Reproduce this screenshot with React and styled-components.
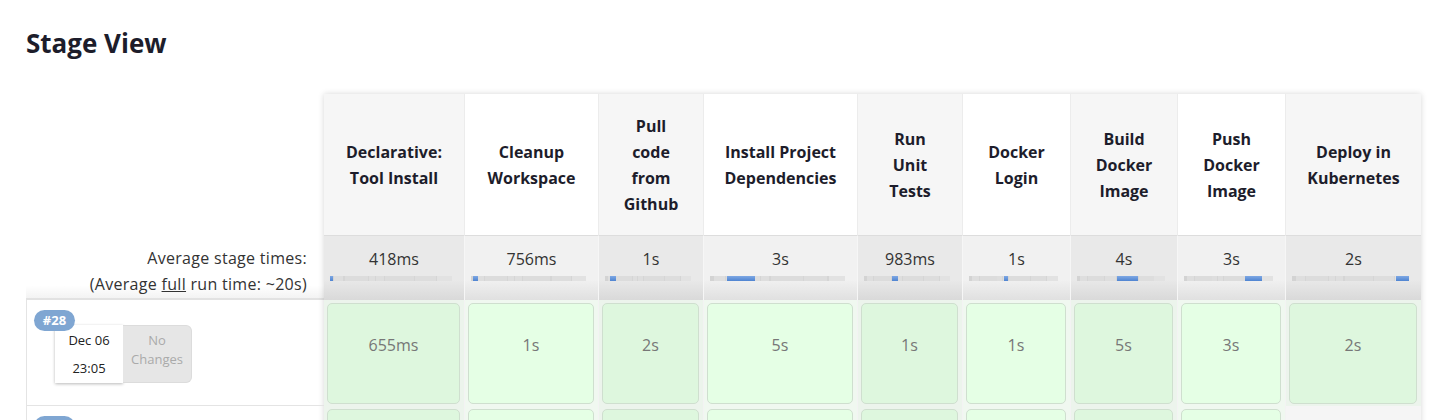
import React from "react";
import styled, { createGlobalStyle } from "styled-components";

const GlobalStyle = createGlobalStyle`
  html, body {
    margin: 0;
    padding: 0;
    background: #fff;
  }
  body {
    font-family: "Open Sans", "Noto Sans", sans-serif;
    color: #14141f;
  }
`;

const stages = [
  { lines: ["Declarative:", "Tool Install"], width: 140, avg: "418ms", at: 0, fill: 2.5, runs: ["655ms", "598ms"] },
  { lines: ["Cleanup", "Workspace"], width: 134, avg: "756ms", at: 1.7, fill: 4, runs: ["1s", "702ms"] },
  { lines: ["Pull", "code", "from", "Github"], width: 105, avg: "1s", at: 6, fill: 7, runs: ["2s", "1s"] },
  { lines: ["Install Project", "Dependencies"], width: 154, avg: "3s", at: 12.7, fill: 21, runs: ["5s", "3s"] },
  { lines: ["Run", "Unit", "Tests"], width: 105, avg: "983ms", at: 33, fill: 6, runs: ["1s", "1s"] },
  { lines: ["Docker", "Login"], width: 108, avg: "1s", at: 39, fill: 5, runs: ["1s", "1s"] },
  { lines: ["Build", "Docker", "Image"], width: 107, avg: "4s", at: 45, fill: 24, runs: ["5s", "4s"] },
  { lines: ["Push", "Docker", "Image"], width: 108, avg: "3s", at: 69, fill: 19, runs: ["3s", "3s"] },
  { lines: ["Deploy in", "Kubernetes"], width: 136, avg: "2s", at: 89, fill: 11, runs: ["2s", null] },
];

const builds = [
  { id: "#28", date: "Dec 06", time: "23:05" },
  { id: "#27", date: "Dec 06", time: "22:41" },
];

const HEADER_H = 141;
const AVG_H = 65;
const RUN_H = 106;

const Page = styled.div`
  padding: 27px 0 0 26px;
`;

const Title = styled.h2`
  margin: 0;
  font-size: 26px;
  line-height: 32px;
  font-weight: 700;
  color: #1d1d2b;
`;

const Board = styled.div`
  display: flex;
  align-items: flex-start;
  margin-top: 35px;
`;

const LeftCol = styled.div`
  width: 298px;
  display: flex;
  flex-direction: column;
  flex-shrink: 0;
`;

const LeftHead = styled.div`
  height: ${HEADER_H}px;
`;

const AvgLabel = styled.div`
  height: ${AVG_H}px;
  box-sizing: border-box;
  padding: 10px 17px 0 0;
  text-align: right;
  font-size: 16px;
  line-height: 26px;
  letter-spacing: 0.3px;
  color: #333;
  border-bottom: 2px solid #e2e2e2;
  background: linear-gradient(to bottom, #fff 80%, #f3f3f3 100%);

  u {
    text-decoration: underline;
  }
`;

const RunInfo = styled.div`
  position: relative;
  height: ${RUN_H}px;
  box-sizing: border-box;
  border-left: 1px solid #e4e4e4;
  border-bottom: 1px solid #e4e4e4;
  padding: 25px 0 0 28px;
  display: flex;
  align-items: flex-start;
`;

const Badge = styled.span`
  position: absolute;
  top: 10px;
  left: 7px;
  z-index: 1;
  min-width: 41px;
  height: 21px;
  box-sizing: border-box;
  padding: 0 7px;
  border-radius: 11px;
  background: #7fa6d2;
  color: #fff;
  font-size: 13px;
  font-weight: 700;
  line-height: 21px;
  text-align: center;
`;

const DateBox = styled.div`
  width: 68px;
  padding: 1px 0;
  background: #fff;
  box-shadow: 0 1px 3px rgba(0, 0, 0, 0.28);
  text-align: center;
  font-size: 13px;
  line-height: 28px;
  color: #222;
`;

const ChangesBox = styled.div`
  width: 69px;
  height: 58px;
  box-sizing: border-box;
  padding-top: 5px;
  background: #e6e6e6;
  border: 1px solid #dcdcdc;
  border-left: none;
  border-radius: 0 6px 6px 0;
  text-align: center;
  font-size: 13px;
  line-height: 19px;
  color: #aaa;
`;

const StageTable = styled.div`
  display: grid;
  grid-template-columns: ${(p) => p.$cols};
  grid-auto-rows: auto;
  box-shadow: 0 0 6px rgba(0, 0, 0, 0.16);
  background: #fff;
`;

const HeadCell = styled.div`
  height: ${HEADER_H}px;
  display: flex;
  align-items: center;
  justify-content: center;
  text-align: center;
  font-size: 16px;
  line-height: 26px;
  font-weight: 700;
  color: #1d1d2b;
  background: ${(p) => (p.$shade ? "#f6f6f6" : "#fff")};
  border-left: ${(p) => (p.$first ? "none" : "1px solid #ececec")};
`;

const AvgCell = styled.div`
  height: ${AVG_H}px;
  box-sizing: border-box;
  padding: 10px 0 0;
  text-align: center;
  font-size: 16px;
  line-height: 26px;
  color: #333;
  border-top: 1px solid #dddddd;
  border-left: ${(p) => (p.$first ? "none" : "1px solid #f6f6f6")};
  background: ${(p) =>
    p.$shade
      ? "linear-gradient(to bottom, #e9e9e9 0%, #e9e9e9 68%, #d9d9d9 100%)"
      : "linear-gradient(to bottom, #f1f1f1 0%, #f1f1f1 68%, #e0e0e0 100%)"};
`;

const Bar = styled.div`
  display: flex;
  height: 5px;
  margin: 4px 12px 0 6px;
  background: linear-gradient(
    to right,
    #d3d3d3 0%, #d3d3d3 3%, #dedede 3%, #dedede 11%, #d5d5d5 11%, #d5d5d5 12%,
    #dcdcdc 12%, #dcdcdc 31%, #d5d5d5 31%, #d5d5d5 32%, #dedede 32%, #dedede 37%,
    #d5d5d5 37%, #d5d5d5 38%, #dedede 38%, #dedede 44%, #d5d5d5 44%, #d5d5d5 45%,
    #dcdcdc 45%, #dcdcdc 69%, #d5d5d5 69%, #d5d5d5 70%, #dddddd 70%, #dddddd 87%,
    #d5d5d5 87%, #d5d5d5 88%, #e2e2e2 88%, #e2e2e2 100%
  );
`;

const BarGap = styled.span`
  flex-shrink: 0;
`;

const BarFill = styled.span`
  flex-shrink: 0;
  min-width: 2px;
  background: linear-gradient(to bottom, #7ea8e4, #4f84d1);
`;

const RunCell = styled.div`
  height: ${RUN_H}px;
  box-sizing: border-box;
  padding: 3px 4px 2px 3px;
  border-left: ${(p) => (p.$first ? "none" : "1px solid #f3f3f3")};
  background: ${(p) => (p.$empty ? "#f5f5f5" : p.$shade ? "#ecf4ec" : "#f0f8f0")};
`;

const StageBox = styled.div`
  height: 100%;
  box-sizing: border-box;
  padding-top: 28px;
  border: 1px solid #cfdfcf;
  border-radius: 5px;
  background: ${(p) => (p.$shade ? "#def7de" : "#e5ffe5")};
  text-align: center;
  font-size: 16px;
  line-height: 26px;
  color: #777;
`;

export default function App() {
  const cols = stages.map((s) => `${s.width}px`).join(" ");

  return (
    <Page>
      <GlobalStyle />
      <Title>Stage View</Title>
      <Board>
        <LeftCol>
          <LeftHead />
          <AvgLabel>
            Average stage times:
            <br />
            (Average <u>full</u> run time: ~20s)
          </AvgLabel>
          {builds.map((b) => (
            <RunInfo key={b.id}>
              <Badge>{b.id}</Badge>
              <DateBox>
                <div>{b.date}</div>
                <div>{b.time}</div>
              </DateBox>
              <ChangesBox>
                No
                <br />
                Changes
              </ChangesBox>
            </RunInfo>
          ))}
        </LeftCol>
        <StageTable $cols={cols}>
          {stages.map((s, i) => (
            <HeadCell key={`h${i}`} $shade={i % 2 === 0} $first={i === 0}>
              <div>
                {s.lines.map((l) => (
                  <div key={l}>{l}</div>
                ))}
              </div>
            </HeadCell>
          ))}
          {stages.map((s, i) => (
            <AvgCell key={`a${i}`} $shade={i % 2 === 0} $first={i === 0}>
              {s.avg}
              <Bar>
                <BarGap style={{ width: `${s.at}%` }} />
                <BarFill style={{ width: `${s.fill}%` }} />
              </Bar>
            </AvgCell>
          ))}
          {builds.map((b, r) =>
            stages.map((s, i) => {
              const val = s.runs[r];
              return (
                <RunCell
                  key={`r${r}-${i}`}
                  $shade={i % 2 === 0}
                  $first={i === 0}
                  $empty={!val}
                >
                  {val && <StageBox $shade={i % 2 === 0}>{val}</StageBox>}
                </RunCell>
              );
            })
          )}
        </StageTable>
      </Board>
    </Page>
  );
}
